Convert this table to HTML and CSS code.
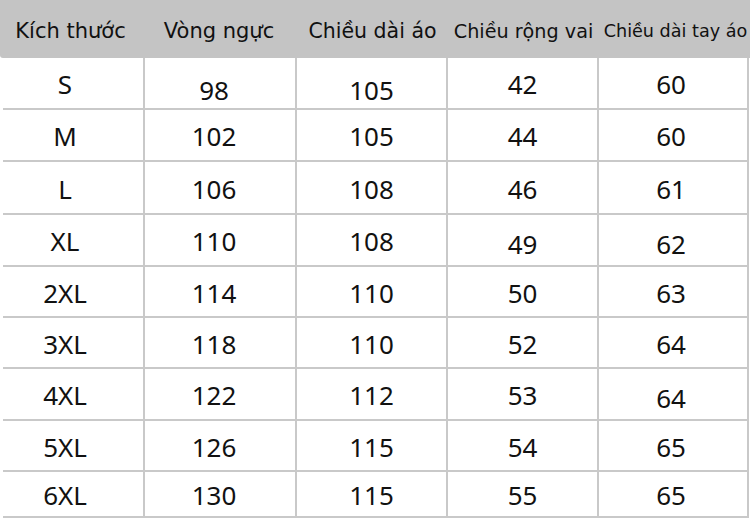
FILE: index.html
```html
<!DOCTYPE html>
<html lang="vi">
<head>
<meta charset="utf-8">
<title>Bảng kích thước</title>
<link rel="stylesheet" href="styles.css">
</head>
<body>
<div class="sheet">
  <div class="head">
    <div class="hc h1">Kích thước</div>
    <div class="hc h2">Vòng ngực</div>
    <div class="hc h3">Chiều dài áo</div>
    <div class="hc h4">Chiều rộng vai</div>
    <div class="hc h5">Chiều dài tay áo</div>
  </div>
  <div class="grid">
    <div class="c">S</div><div class="c dn2">98</div><div class="c dn2">105</div><div class="c">42</div><div class="c">60</div>
    <div class="c">M</div><div class="c">102</div><div class="c">105</div><div class="c">44</div><div class="c">60</div>
    <div class="c">L</div><div class="c">106</div><div class="c">108</div><div class="c">46</div><div class="c">61</div>
    <div class="c">XL</div><div class="c">110</div><div class="c">108</div><div class="c dn1">49</div><div class="c dn1">62</div>
    <div class="c">2XL</div><div class="c">114</div><div class="c">110</div><div class="c">50</div><div class="c">63</div>
    <div class="c">3XL</div><div class="c">118</div><div class="c">110</div><div class="c">52</div><div class="c">64</div>
    <div class="c">4XL</div><div class="c">122</div><div class="c">112</div><div class="c">53</div><div class="c dn1">64</div>
    <div class="c">5XL</div><div class="c">126</div><div class="c">115</div><div class="c">54</div><div class="c">65</div>
    <div class="c">6XL</div><div class="c">130</div><div class="c">115</div><div class="c">55</div><div class="c">65</div>
  </div>
</div>
</body>
</html>
```
FILE: styles.css
```css
html, body {
  margin: 0;
  padding: 0;
  background: #ffffff;
}
.sheet {
  width: 750px;
  height: 519px;
  overflow: hidden;
  color: #111111;
}
.head {
  display: grid;
  grid-template-columns: 145px 152px 151px 151px 151px;
  height: 58px;
  background: #c4c4c4;
  border-bottom-left-radius: 3px;
  font-family: "DejaVu Sans", sans-serif;
}
.hc {
  display: flex;
  align-items: center;
  justify-content: center;
  white-space: nowrap;
  padding-top: 4px;
}
.h1 { font-size: 21px; padding-right: 4px; }
.h2 { font-size: 21px; padding-right: 4px; }
.h3 { font-size: 20.5px; }
.h4 { font-size: 19.2px; }
.h5 { font-size: 17.6px; padding-left: 2px; }
.grid {
  margin-left: 3px;
  display: grid;
  grid-template-columns: 142px 152px 151px 151px 150px;
  grid-template-rows: 52px 52px 53px 52px 51px 51px 52px 51px 46px;
  font-family: "Noto Sans", sans-serif;
  font-size: 26px;
}
.c {
  display: flex;
  align-items: center;
  justify-content: center;
  border-right: 2px solid #c9c9c9;
  border-bottom: 2px solid #c9c9c9;
  padding-top: 2px;
}
.c:nth-child(5n+1) {
  padding-right: 16px;
}
.c:nth-child(5n+2) {
  padding-right: 12px;
}
.c:nth-child(5n) {
  padding-right: 4px;
}
.c.dn1 { padding-top: 8px; }
.c.dn2 { padding-top: 13px; }
```
